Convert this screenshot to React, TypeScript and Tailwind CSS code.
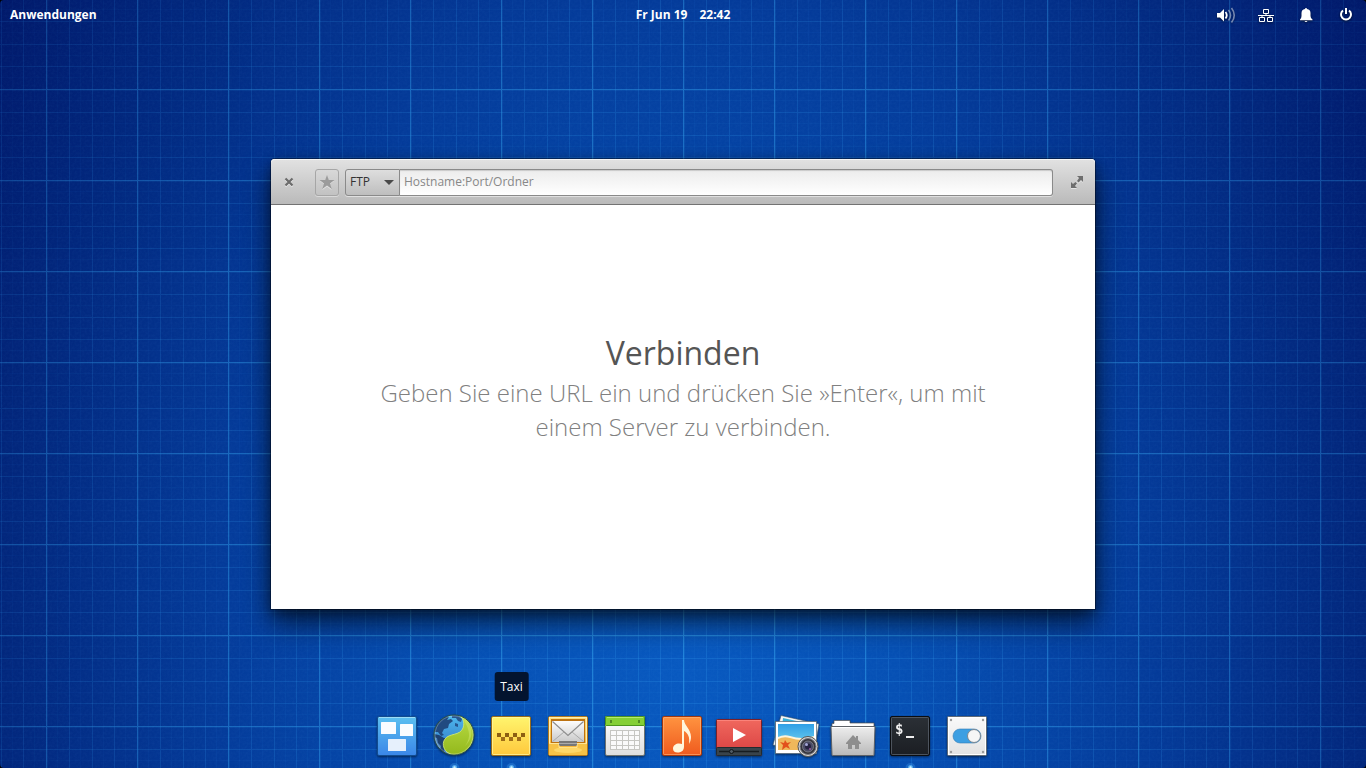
import type { ReactNode } from "react";

const MINOR = [23, 46, 68];

function Wallpaper() {
  return (
    <svg className="absolute inset-0 h-full w-full" aria-hidden="true">
      <defs>
        <radialGradient id="base" cx="0" cy="0" r="1" gradientTransform="translate(0.5 0.88) scale(0.62 1.6)">
          <stop offset="0" stopColor="#0859c0" />
          <stop offset="0.25" stopColor="#0650b4" />
          <stop offset="0.55" stopColor="#043b9a" />
          <stop offset="0.8" stopColor="#02277d" />
          <stop offset="1" stopColor="#011768" />
        </radialGradient>
        <radialGradient id="fade" cx="0" cy="0" r="1" gradientTransform="translate(0.5 0.8) scale(0.65 1.5)">
          <stop offset="0" stopColor="#fff" />
          <stop offset="0.55" stopColor="#bbb" />
          <stop offset="1" stopColor="#666" />
        </radialGradient>
        <pattern id="grid" x="46" y="89" width="91" height="91" patternUnits="userSpaceOnUse">
          {[11, 34, 57, 79].map((p) => (
            <g key={p} fill="#2f9bea" opacity="0.07">
              <rect x={p} width="1" height="91" />
              <rect y={p} width="91" height="1" />
            </g>
          ))}
          {MINOR.map((p) => (
            <g key={p} fill="#2f9bea" opacity="0.26">
              <rect x={p} width="1" height="91" />
              <rect y={p} width="91" height="1" />
            </g>
          ))}
          <g fill="#35a4ee" opacity="0.58">
            <rect width="1" height="91" />
            <rect width="91" height="1" />
          </g>
          <g fill="#35a4ee" opacity="0.15">
            <rect x="1" width="1" height="91" />
            <rect y="1" width="91" height="1" />
          </g>
        </pattern>
        <filter id="weave" x="0" y="0" width="100%" height="100%">
          <feTurbulence type="fractalNoise" baseFrequency="0.4" numOctaves="2" />
          <feColorMatrix values="0 0 0 0 0.2  0 0 0 0 0.5  0 0 0 0 0.9  0.5 0 0 0 -0.15" />
        </filter>
        <mask id="lines">
          <rect width="100%" height="100%" fill="url(#fade)" />
        </mask>
      </defs>
      <rect width="100%" height="100%" fill="url(#base)" />
      <rect width="100%" height="100%" filter="url(#weave)" opacity="0.14" />
      <rect width="100%" height="100%" fill="url(#grid)" mask="url(#lines)" />
    </svg>
  );
}

function Grad({ id, from, to }: { id: string; from: string; to: string }) {
  return (
    <linearGradient id={id} x1="0" y1="0" x2="0" y2="1">
      <stop offset="0" stopColor={from} />
      <stop offset="1" stopColor={to} />
    </linearGradient>
  );
}

const icons: { name: string; running?: boolean; tip?: boolean; art: ReactNode }[] = [
  {
    name: "Arbeitsflächen",
    art: (
      <>
        <Grad id="g1" from="#5cc0f0" to="#3a86e8" />
        <rect x="8.5" y="8.5" width="39" height="39" rx="1.5" fill="url(#g1)" stroke="#124c8f" />
        <path d="M10 9.5h36" stroke="#9bdcf8" />
        <g fill="#fafcff">
          <rect x="12" y="14" width="15" height="12" rx=".5" />
          <rect x="31" y="16" width="13" height="12" rx=".5" />
          <rect x="19" y="31" width="18" height="12" rx=".5" fill="#e6f0fc" />
        </g>
      </>
    ),
  },
  {
    name: "Webbrowser",
    running: true,
    art: (
      <>
        <Grad id="g2" from="#4fb9ee" to="#2c6fc0" />
        <Grad id="g2b" from="#b9dc45" to="#93b81c" />
        <clipPath id="c2">
          <circle cx="28" cy="27" r="20" />
        </clipPath>
        <circle cx="28" cy="27" r="20" fill="url(#g2)" />
        <g clipPath="url(#c2)">
          <path d="M9 18q4-7 11-10l3 1-2 3 4-1 2 2-4 3-1 4-4 1-2 4 2 2-3 1-3-4-4 0z" fill="#214a80" />
          <path d="M26 7l6 0 4 4-1 3-3-1-2-3-4 0zM29 15l3 1 0 3-3-1z" fill="#27558f" />
          <path d="M8 26l5 1 5 3 4 1-3 4-1 8 2 4q-8-2-11-11z" fill="#1e4172" />
          <path d="M8 29l2 7 4 6 1-4-3-3-1-5z" fill="#4f87bd" />
          <path
            d="M32 7C43 9 49 18 48 28C46 41 36 48 27 47C18 45 15 36 19 31C23 25 34 28 37 20C39 14 37 9 32 7Z"
            fill="url(#g2b)"
            stroke="#d5ee76"
            strokeWidth=".8"
          />
          <path d="M37 11C48 17 48 30 39 38C46 29 43 20 37 11Z" fill="#d4ea76" opacity=".45" />
        </g>
        <circle cx="28" cy="27" r="20" fill="none" stroke="#284f48" />
        <circle cx="28" cy="27" r="19" fill="none" stroke="#fff" strokeOpacity=".25" />
      </>
    ),
  },
  {
    name: "Taxi",
    running: true,
    tip: true,
    art: (
      <>
        <Grad id="g3" from="#fff56e" to="#ffc83c" />
        <rect x="8.5" y="8.5" width="39" height="39" rx="1.5" fill="url(#g3)" stroke="#9a6c18" />
        <rect x="9.5" y="9.5" width="37" height="37" rx="1" fill="none" stroke="#fff9a8" strokeOpacity=".7" />
        <path d="M14 25h4v4h-4zM22 25h4v4h-4zM30 25h4v4h-4zM38 25h4v4h-4z" fill="#8d5f12" />
        <path d="M18 29h4v4h-4zM26 29h4v4h-4zM34 29h4v4h-4z" fill="#a06d18" />
      </>
    ),
  },
  {
    name: "E-Mail",
    art: (
      <>
        <Grad id="g4" from="#ffe07a" to="#f3a929" />
        <Grad id="g4b" from="#fdfdfd" to="#c9c9c9" />
        <rect x="8.5" y="8.5" width="39" height="39" rx="1.5" fill="url(#g4)" stroke="#b57a1c" />
        <rect x="9.5" y="9.5" width="37" height="37" fill="none" stroke="#ffedb0" />
        <rect x="11" y="11" width="34" height="25" fill="#bd7312" />
        <rect x="12" y="13" width="32" height="21" fill="url(#g4b)" />
        <path d="M12.500 13.500L28 27.500L43.500 13.500" fill="none" stroke="#8e8e8e" strokeWidth="1.200" />
        <path d="M12.500 33.500L24 24M43.500 33.500L32 24" fill="none" stroke="#aaa" />
        <path d="M9 35h10v3q0 1 1 1h16q1 0 1-1v-3h10v12H9z" fill="#f7c347" />
        <path d="M9 35.500h10v4h18v-4h10" fill="none" stroke="#ffe595" />
        <path d="M19 33h18v4l-1 1H20l-1-1z" fill="#777" />
        <path d="M19 35.500h18" stroke="#aaa" />
        <ellipse cx="28" cy="42" rx="14" ry="3" fill="#ffdf76" opacity=".7" />
      </>
    ),
  },
  {
    name: "Kalender",
    art: (
      <>
        <Grad id="g5" from="#ffffff" to="#dedede" />
        <rect x="8.5" y="9.5" width="39" height="38" rx="1.500" fill="url(#g5)" stroke="#6f7370" />
        <path d="M8 18V9.500Q8 8 9.500 8h37Q48 8 48 9.500V18z" fill="#85cf35" />
        <rect x="8.5" y="8.5" width="39" height="9" rx="1" fill="none" stroke="#4e951d" />
        <path d="M10 9.500h36" stroke="#b4ea6c" />
        <path d="M14 12v3M42 12v3" stroke="#538c23" strokeWidth="2" />
        <rect x="13" y="22" width="30" height="20" fill="#fafafa" />
        <path
          d="M13.500 22v20M19.500 22v20M25.500 22v20M31.500 22v20M37.500 22v20M42.500 22v20M13 22.500h30M13 27.500h30M13 32.500h30M13 37.500h30M13 41.500h30"
          stroke="#c6c6c2"
        />
      </>
    ),
  },
  {
    name: "Musik",
    art: (
      <>
        <Grad id="g6" from="#ff9440" to="#ef5a1e" />
        <rect x="8.5" y="8.5" width="39" height="39" rx="1.5" fill="url(#g6)" stroke="#a5380d" />
        <rect x="9.5" y="9.5" width="37" height="37" rx="1" fill="none" stroke="#ffb57b" strokeOpacity=".6" />
        <path
          d="M28 12h2c0 5 7 9 7 17c0 3-1 5-2 7c1-7-1-11-5-13v16c0 3-2 5-5 5.500c-4 .5-6-1-6-4c0-3 3-5 6-5q2 0 3 .5z"
          fill="#fff6dc"
        />
      </>
    ),
  },
  {
    name: "Videos",
    art: (
      <>
        <Grad id="g7" from="#f0685e" to="#d83f40" />
        <rect x="5.5" y="11.5" width="45" height="36" rx="1" fill="url(#g7)" stroke="#7d2028" />
        <path d="M6 12.500h44" stroke="#ff9088" strokeOpacity=".7" />
        <rect x="5.5" y="39.5" width="45" height="8" rx="1" fill="#3a444b" stroke="#232a2f" />
        <path d="M8 43.500h40" stroke="#171d21" strokeWidth="1.500" />
        <circle cx="20.5" cy="43.500" r="2" fill="#4f5a62" stroke="#12171a" />
        <path d="M22 20v14l13-7z" fill="#fff" />
      </>
    ),
  },
  {
    name: "Fotos",
    art: (
      <>
        <Grad id="g8" from="#2f9fe6" to="#7fdcf2" />
        <path d="M13 7.500L51 16L46 44L5 37z" fill="#f5f5f5" stroke="#35556f" strokeWidth=".6" />
        <path d="M15 10l32 7v3H14z" fill="#37b0d8" />
        <rect x="7.5" y="13.500" width="41" height="32" fill="#fff" stroke="#52626e" strokeWidth=".7" />
        <rect x="10" y="16" width="36" height="26" fill="url(#g8)" />
        <path d="M10 29q6-3 12-1t12 2t12-2v14H10z" fill="#fff4d8" />
        <path d="M10 31q6-3 12-1t12 2t12-2v12H10z" fill="#efb85b" />
        <path d="M17 32l2 3 4-1-3 3 2 4-4-2-4 3 1-5-3-3 4 1z" fill="#e2501c" />
        <circle cx="40" cy="38.500" r="10" fill="#d6d6d6" stroke="#555" />
        <circle cx="40" cy="38.500" r="8" fill="#35353d" stroke="#77777d" />
        <circle cx="40" cy="38.500" r="5.500" fill="#4b4c66" stroke="#8b8b94" strokeWidth=".7" />
        <circle cx="40" cy="38.500" r="3" fill="#252140" />
        <circle cx="38.500" cy="36.500" r="1.500" fill="#a5a8d8" />
        <circle cx="42" cy="41" r="1" fill="#9a5aa0" />
      </>
    ),
  },
  {
    name: "Dateien",
    art: (
      <>
        <Grad id="g9" from="#eeeeee" to="#b9b9b9" />
        <path d="M7 20v-4.500h2V12.500h16V15h24v5z" fill="#fff" stroke="#555" strokeWidth=".7" />
        <path d="M6 18.500h44l-1 28.500q0 .5-.5.5H7.500q-.5 0-.5-.5z" fill="url(#g9)" stroke="#5e6267" />
        <path d="M7 19.500h42" stroke="#fff" />
        <path d="M28 27l3 3v-2h2v4l3 3v1h-2v5h-4v-4h-3v4h-4v-5h-2v-1z" fill="#8e8e8e" />
      </>
    ),
  },
  {
    name: "Terminal",
    running: true,
    art: (
      <>
        <Grad id="g10" from="#2b3036" to="#1b1e23" />
        <rect x="8.5" y="8.5" width="39" height="39" rx="1.5" fill="url(#g10)" stroke="#0b0d10" />
        <rect x="9.5" y="9.5" width="37" height="37" rx="1" fill="none" stroke="#59606a" strokeOpacity=".8" />
        <text
          x="13"
          y="26"
          fill="#f2f2f2"
          fontFamily="DejaVu Sans Mono, monospace"
          fontWeight="700"
          fontSize="14"
        >
          $
        </text>
        <rect x="24" y="28" width="8" height="2" fill="#eee" />
      </>
    ),
  },
  {
    name: "Einstellungen",
    art: (
      <>
        <Grad id="g11" from="#fafafa" to="#e2e2e2" />
        <rect x="8.5" y="8.5" width="39" height="39" rx="1" fill="url(#g11)" stroke="#5f6a76" />
        <rect x="9.5" y="9.5" width="37" height="37" fill="none" stroke="#fff" />
        <g fill="#9a9a9a">
          <circle cx="12" cy="12" r="1.200" />
          <circle cx="44" cy="12" r="1.200" />
          <circle cx="12" cy="44" r="1.200" />
          <circle cx="44" cy="44" r="1.200" />
        </g>
        <rect x="14" y="21" width="28" height="14" rx="7" fill="#3d9fe2" stroke="#347cb5" strokeWidth=".6" />
        <circle cx="35" cy="28" r="6.500" fill="#f6f6f6" stroke="#7d8790" />
      </>
    ),
  },
];

function Dock() {
  return (
    <nav aria-label="Dock" className="flex justify-center pr-px">
      {icons.map((icon) => (
        <button key={icon.name} type="button" aria-label={icon.name} className="relative h-[60px] w-[57px]">
          {icon.tip && (
            <span
              role="tooltip"
              className="absolute bottom-[67px] left-1/2 flex h-[29px] -translate-x-1/2 items-center rounded-[3px] bg-[#03142f] px-[6px] text-[12px] text-white"
            >
              Taxi
            </span>
          )}
          <svg viewBox="0 0 57 60" className="block h-[60px] w-[57px]" aria-hidden="true">
            <g className="drop-shadow-[0_1px_1px_rgba(0,0,0,0.5)]">{icon.art}</g>
            {icon.running && (
              <>
                <circle cx="28.500" cy="60" r="5" fill="#58b8ff" opacity=".25" />
                <circle cx="28.500" cy="59.500" r="2.500" fill="#6cc4ff" opacity=".7" />
                <circle cx="28.500" cy="59.500" r="1.200" fill="#c8f0ff" />
              </>
            )}
          </svg>
        </button>
      ))}
    </nav>
  );
}

function Tray({ label, children }: { label: string; children: ReactNode }) {
  return (
    <button type="button" aria-label={label} className="h-5 w-5">
      <svg
        viewBox="0 0 20 20"
        className="block h-5 w-5 overflow-visible drop-shadow-[0_1px_1px_rgba(0,0,0,0.6)]"
        aria-hidden="true"
      >
        {children}
      </svg>
    </button>
  );
}

function TopBar() {
  return (
    <header className="grid h-[30px] grid-cols-[1fr_auto_1fr] items-center px-[10px] text-[12px] font-bold text-white [text-shadow:0_1px_2px_rgba(0,0,0,0.6)]">
      <button type="button" className="justify-self-start">
        Anwendungen
      </button>
      <button type="button" className="flex gap-3">
        <span>Fr Jun 19</span>
        <span>22:42</span>
      </button>
      <div className="flex gap-5 justify-self-end">
        <Tray label="Lautstärke">
          <path d="M1 8h3l4-4v12.500l-4-4H1z" fill="#fff" />
          <path d="M9.500 7q2.500 3.200 0 6.500" fill="none" stroke="#fff" strokeWidth="1.800" />
          <path
            d="M12.500 5q4 5.200 0 10.500M15.500 3q5.500 7.200 0 14.500"
            fill="none"
            stroke="#fff"
            strokeOpacity=".45"
            strokeWidth="1.600"
          />
        </Tray>
        <Tray label="Netzwerk">
          <g fill="none" stroke="#fff">
            <path d="M7.500 4.500h5v4h-5zM3.500 12.500h5v4h-5zM11.500 12.500h5v4h-5z" />
            <path d="M10 8.500v2M2 10.500h16M6 10.500v2M14 10.500v2" />
          </g>
        </Tray>
        <Tray label="Benachrichtigungen">
          <path
            d="M10 3q1 0 1 1q3.500 .5 3.500 4v3q0 2 2 3.500v.8H4v-.8Q5.500 13 5.500 11V8q0-3.500 3.500-4q0-1 1-1zM8.500 16h3q-.5 1-1.500 1t-1.500-1z"
            fill="#fff"
          />
        </Tray>
        <Tray label="Sitzung">
          <path d="M7 5.500a5 5 0 1 0 6 0" fill="none" stroke="#fff" strokeWidth="2" />
          <path d="M10 3v6" stroke="#fff" strokeWidth="2" />
        </Tray>
      </div>
    </header>
  );
}

function TaxiWindow() {
  return (
    <section
      aria-label="Taxi"
      className="w-full max-w-[824px] rounded-t-[4px] bg-white shadow-[0_0_0_1px_rgba(0,0,0,0.35),0_14px_28px_rgba(0,0,0,0.6),0_4px_12px_rgba(0,0,0,0.35)]"
    >
      <div className="flex h-[46px] items-center rounded-t-[4px] border-b border-[#737373] bg-linear-to-b from-[#e2e2e2] to-[#bababa] px-[10px] pt-px text-[12px] shadow-[inset_0_1px_0_#f4f4f4]">
        <button type="button" aria-label="Schließen" className="h-4 w-4">
          <svg viewBox="0 0 16 16" className="block h-4 w-4" aria-hidden="true">
            <path d="M4.500 5.500l7 7M11.500 5.500l-7 7" stroke="#fff" strokeOpacity=".6" strokeWidth="2" />
            <path d="M4.500 4.500l7 7M11.500 4.500l-7 7" stroke="#6c6c6c" strokeWidth="2.200" />
          </svg>
        </button>
        <button
          type="button"
          aria-label="Lesezeichen"
          className="ml-[18px] h-[27px] w-6 rounded-[3px] border border-[#a6a6a6] shadow-[0_1px_0_rgba(255,255,255,0.4)]"
        >
          <svg viewBox="0 0 22 25" className="block h-[25px] w-[22px]" aria-hidden="true">
            <path d="M11 6l1.800 5H18l-4.200 3.200L15.500 20L11 16.500L6.500 20l1.700-5.800L4 11h5.200z" fill="#fff" opacity=".5" />
            <path d="M11 5l1.800 5H18.500l-4.500 3.400L15.700 19L11 15.600L6.300 19L8 13.400L3.500 10h5.700z" fill="#9b9b9b" />
          </svg>
        </button>
        <div className="ml-[6px] flex h-[27px] min-w-0 flex-1 rounded-[3px] shadow-[0_1px_0_rgba(255,255,255,0.5)]">
          <div className="relative">
            <select
              aria-label="Protokoll"
              className="h-[27px] w-[55px] appearance-none rounded-l-[3px] border border-[#8a8a8a] bg-linear-to-b from-[#dedede] to-[#bebebe] pl-1 text-[#333] outline-none"
            >
              <option>FTP</option>
            </select>
            <svg
              viewBox="0 0 10 5"
              className="pointer-events-none absolute top-[11px] right-[6px] h-[5px] w-[10px]"
              aria-hidden="true"
            >
              <path d="M0 0h10L5 5z" fill="#4a4a4a" />
            </svg>
          </div>
          <input
            type="text"
            aria-label="Adresse"
            placeholder="Hostname:Port/Ordner"
            className="min-w-0 flex-1 rounded-r-[3px] border border-l-0 border-[#8a8a8a] bg-linear-to-b from-[#ececec] to-white px-1 text-[#333] shadow-[inset_0_1px_1px_rgba(0,0,0,0.15)] outline-none placeholder:text-[#888]"
          />
        </div>
        <button type="button" aria-label="Maximieren" className="ml-4 h-4 w-4">
          <svg viewBox="0 0 16 16" className="block h-4 w-4" aria-hidden="true">
            <path
              d="M8 3h6v6l-2-2-2.500 2.500L8 8l2-3zM2 9v6h6l-2-2 2-2.500L6.500 9L4 11z"
              fill="#fff"
              opacity=".5"
            />
            <path d="M8 2h6v6l-2-2-2.500 2.500L8 7l2-3zM2 8v6h6l-2-2 2-2.500L6.500 8L4 10z" fill="#6e6e6e" />
          </svg>
        </button>
      </div>
      <div className="flex min-h-[404px] flex-col items-center justify-center px-8 pb-10 text-center">
        <h1 className="text-[32px] leading-[46px] text-[#555]">Verbinden</h1>
        <p className="max-w-[620px] text-[24px] leading-[34px] font-light text-[#808080]">
          Geben Sie eine URL ein und drücken Sie »Enter«, um mit einem Server zu verbinden.
        </p>
      </div>
    </section>
  );
}

export default function App() {
  return (
    <div className="bg-black font-['Open_Sans','Noto_Sans',sans-serif]">
      <div className="relative isolate overflow-hidden rounded-[4px]">
        <Wallpaper />
        <div className="relative grid min-h-screen grid-rows-[60px_1fr_60px]">
          <TopBar />
          <main className="flex items-center justify-center">
            <TaxiWindow />
          </main>
          <Dock />
        </div>
      </div>
    </div>
  );
}
